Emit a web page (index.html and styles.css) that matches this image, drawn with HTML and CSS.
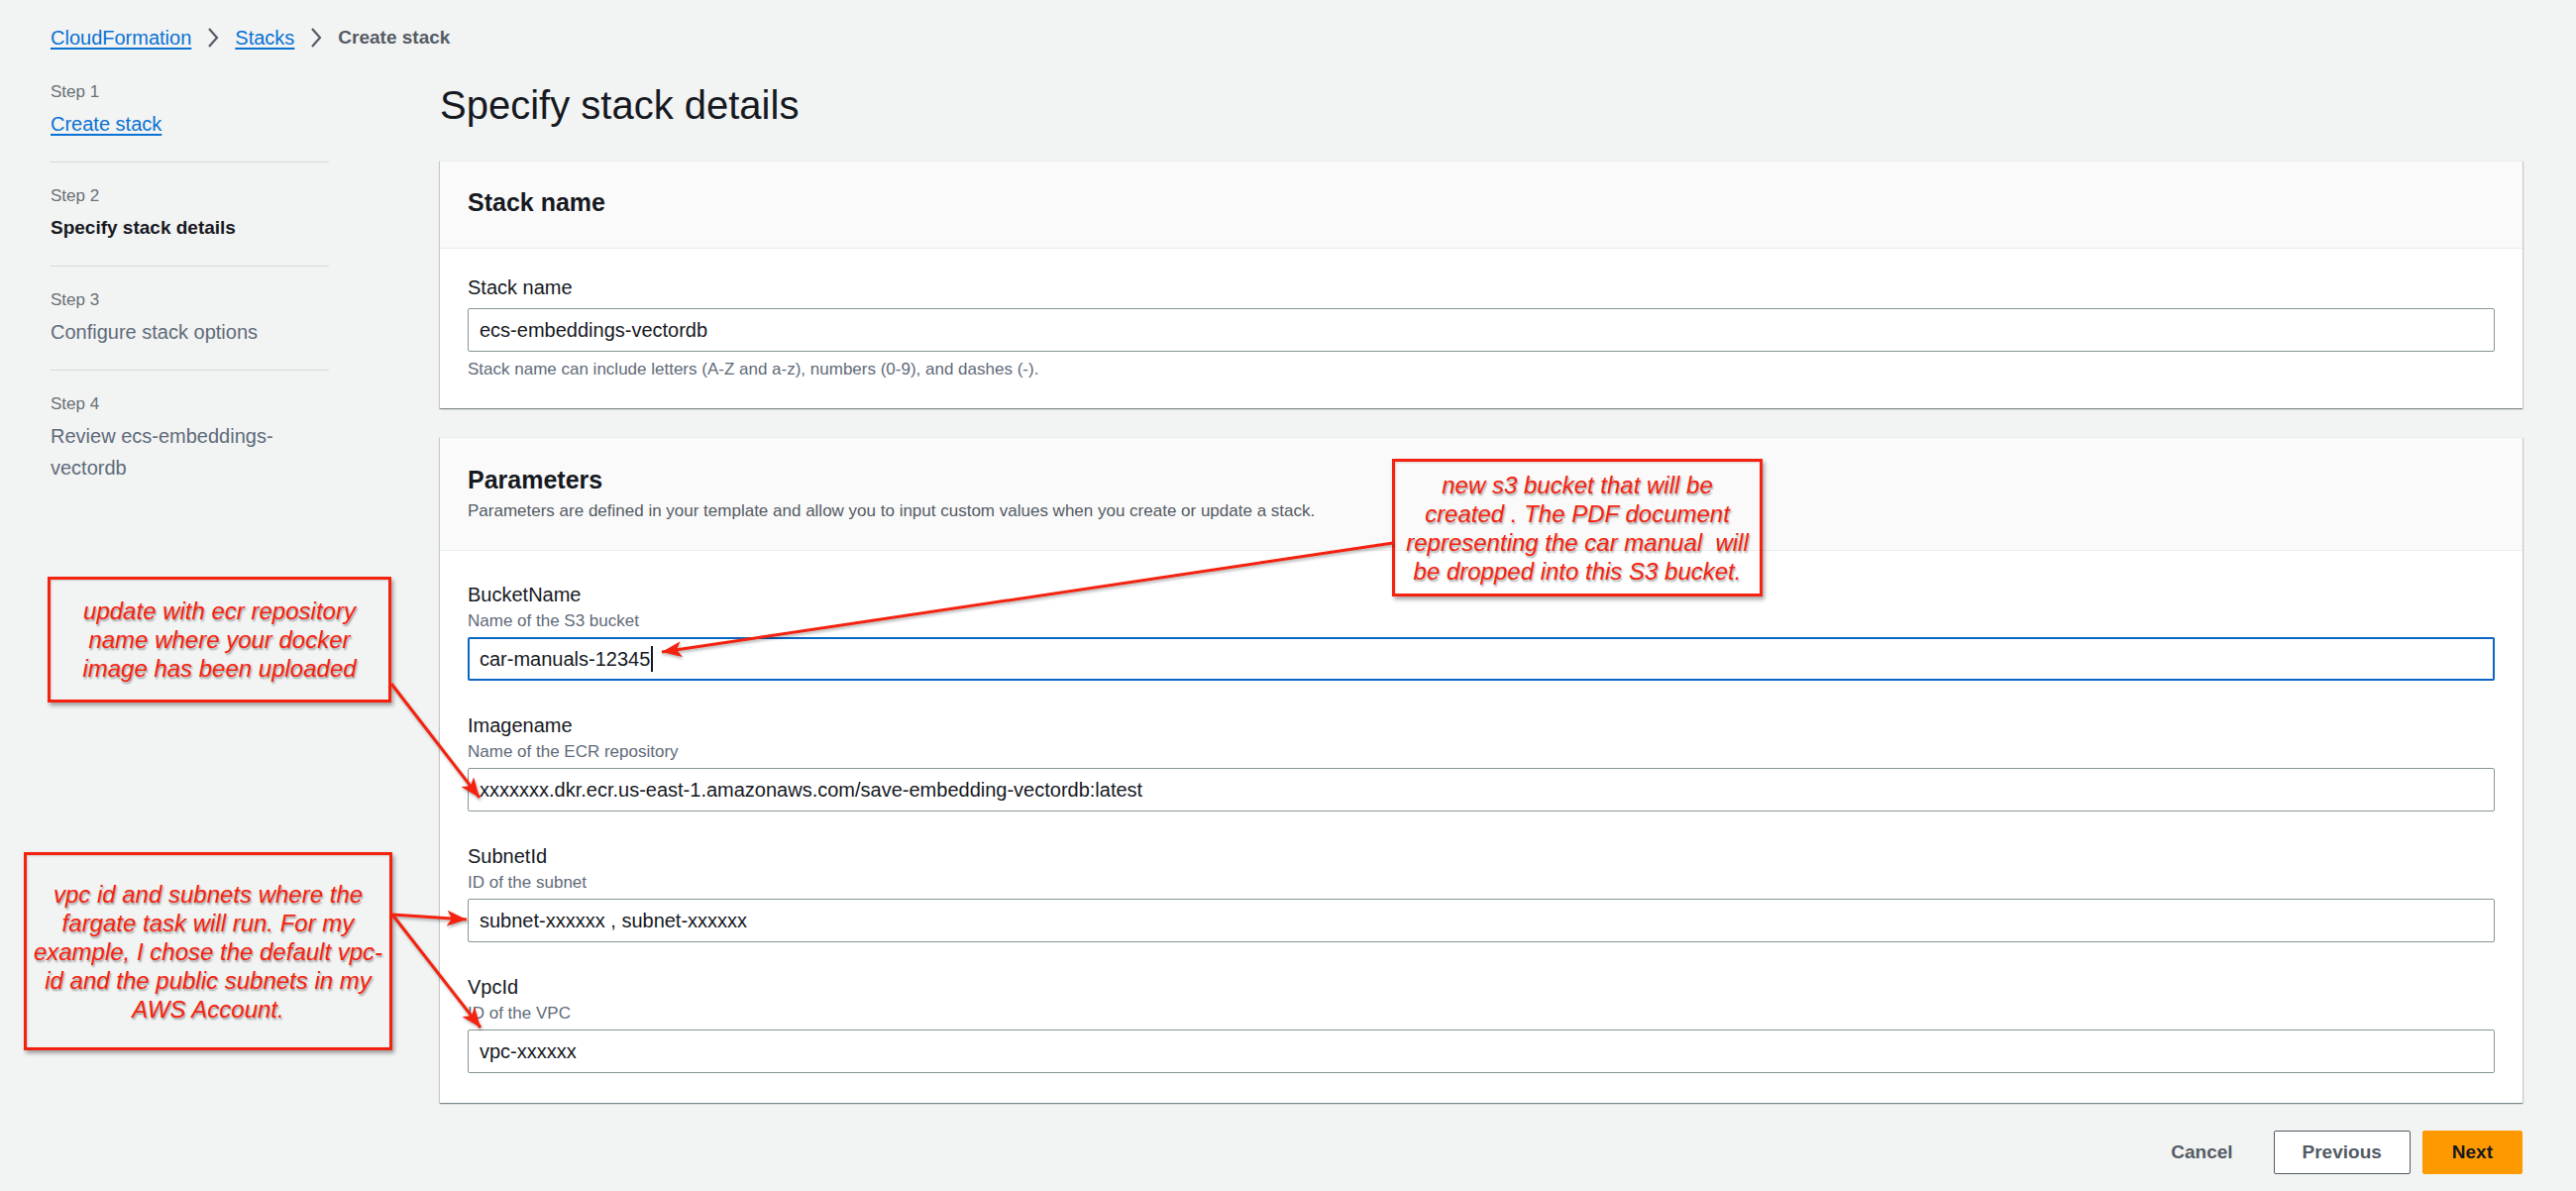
FILE: index.html
```html
<!DOCTYPE html>
<html lang="en">
<head>
<meta charset="utf-8">
<title>Specify stack details</title>
<link rel="stylesheet" href="styles.css">
</head>
<body>
<div class="page">
  <nav class="breadcrumb">
    <a class="crumb-link" href="#">CloudFormation</a>
    <svg class="chev" viewBox="0 0 12 22" width="12" height="22"><polyline points="2,2 10,11 2,20" fill="none" stroke="#545b64" stroke-width="2.2"/></svg>
    <a class="crumb-link" href="#">Stacks</a>
    <svg class="chev" viewBox="0 0 12 22" width="12" height="22"><polyline points="2,2 10,11 2,20" fill="none" stroke="#545b64" stroke-width="2.2"/></svg>
    <span class="crumb-current">Create stack</span>
  </nav>

  <div class="layout">
    <ul class="steps">
      <li class="step">
        <div class="step-num">Step 1</div>
        <div class="step-title"><a class="step-link" href="#">Create stack</a></div>
      </li>
      <li class="step">
        <div class="step-num">Step 2</div>
        <div class="step-title step-active">Specify stack details</div>
      </li>
      <li class="step">
        <div class="step-num">Step 3</div>
        <div class="step-title step-disabled">Configure stack options</div>
      </li>
      <li class="step step-last">
        <div class="step-num">Step 4</div>
        <div class="step-title step-disabled">Review ecs-embeddings-vectordb</div>
      </li>
    </ul>

    <main class="main">
      <h1 class="page-title">Specify stack details</h1>

      <section class="card">
        <header class="card-header card-header-single">
          <h2 class="card-title">Stack name</h2>
        </header>
        <div class="card-body card-body-stack">
          <div class="field-label">Stack name</div>
          <div class="input">ecs-embeddings-vectordb</div>
          <div class="field-hint">Stack name can include letters (A-Z and a-z), numbers (0-9), and dashes (-).</div>
        </div>
      </section>

      <section class="card card-params">
        <header class="card-header card-header-desc">
          <h2 class="card-title">Parameters</h2>
          <p class="card-desc">Parameters are defined in your template and allow you to input custom values when you create or update a stack.</p>
        </header>
        <div class="card-body card-body-params">
          <div class="field">
            <div class="field-label">BucketName</div>
            <div class="field-desc">Name of the S3 bucket</div>
            <div class="input input-focus">car-manuals-12345<span class="caret"></span></div>
          </div>
          <div class="field">
            <div class="field-label">Imagename</div>
            <div class="field-desc">Name of the ECR repository</div>
            <div class="input">xxxxxxx.dkr.ecr.us-east-1.amazonaws.com/save-embedding-vectordb:latest</div>
          </div>
          <div class="field">
            <div class="field-label">SubnetId</div>
            <div class="field-desc">ID of the subnet</div>
            <div class="input">subnet-xxxxxx , subnet-xxxxxx</div>
          </div>
          <div class="field">
            <div class="field-label">VpcId</div>
            <div class="field-desc">ID of the VPC</div>
            <div class="input">vpc-xxxxxx</div>
          </div>
        </div>
      </section>

      <div class="actions">
        <button class="btn btn-link">Cancel</button>
        <button class="btn btn-normal">Previous</button>
        <button class="btn btn-primary">Next</button>
      </div>
    </main>
  </div>
</div>

<div class="note note-ecr">update with ecr repository<br>name where your docker<br>image has been uploaded</div>
<div class="note note-vpc">vpc id and subnets where the<br>fargate task will run. For my<br>example, I chose the default vpc-<br>id and the public subnets in my<br>AWS Account.</div>
<div class="note note-s3">new s3 bucket that will be<br>created . The PDF document<br>representing the car manual&nbsp; will<br>be dropped into this S3 bucket.</div>

<svg class="arrows" width="2600" height="1202" viewBox="0 0 2600 1202">
  <defs>
    <marker id="head" markerUnits="userSpaceOnUse" markerWidth="22" markerHeight="16" refX="20" refY="8" orient="auto">
      <path d="M0,0 L20,8 L0,16 L5,8 Z" fill="#f5220f"/>
    </marker>
  </defs>
  <g stroke="#f5220f" stroke-width="3" fill="none" marker-end="url(#head)">
    <line x1="1406" y1="548" x2="668" y2="658"/>
    <line x1="395" y1="690" x2="484" y2="805"/>
    <line x1="396" y1="923" x2="471" y2="928"/>
    <line x1="396" y1="923" x2="485" y2="1037"/>
  </g>
</svg>
</body>
</html>
```

FILE: styles.css
```css
* { box-sizing: border-box; }

body {
  margin: 0;
  background: #f2f3f3;
  font-family: "Liberation Sans", Arial, sans-serif;
  color: #16191f;
  position: relative;
  width: 2600px;
  height: 1202px;
  overflow: hidden;
}

.page {
  padding: 26px 54px 0 51px;
}

.breadcrumb {
  display: flex;
  align-items: center;
  height: 24px;
  gap: 16px;
  font-size: 20px;
}

.crumb-link {
  color: #0972d3;
  text-decoration: underline;
  text-underline-offset: 3px;
}

.chev { display: block; }

.crumb-current {
  color: #545b64;
  font-weight: bold;
  font-size: 19px;
}

.layout {
  display: grid;
  grid-template-columns: 281px 1fr;
  column-gap: 112px;
  margin-top: 32px;
}

/* steps nav */
.steps {
  list-style: none;
  margin: 0;
  padding: 0;
}

.step {
  padding-bottom: 22px;
  border-bottom: 1px solid #d5dbdb;
  margin-bottom: 23px;
}

.step-last {
  border-bottom: none;
}

.step-num {
  font-size: 17px;
  line-height: 22px;
  color: #687078;
}

.step-title {
  margin-top: 5px;
  font-size: 20px;
  line-height: 32px;
  color: #5f6b7a;
}

.step-link {
  color: #0972d3;
  text-decoration: underline;
  text-underline-offset: 3px;
}

.step-active {
  color: #16191f;
  font-weight: bold;
  font-size: 19px;
}

/* main */
.main {
  min-width: 0;
}

.page-title {
  margin: 0;
  font-size: 40px;
  line-height: 48px;
  font-weight: normal;
  color: #16191f;
}

.card {
  margin-top: 32px;
  background: #fff;
  border-top: 1px solid #eaeded;
  box-shadow: 0 1px 1px 0 rgba(0, 28, 36, 0.3), 1px 1px 1px 0 rgba(0, 28, 36, 0.15), -1px 1px 1px 0 rgba(0, 28, 36, 0.15);
}

.card-params {
  margin-top: 29px;
}

.card-header {
  background: #fafafa;
  border-bottom: 1px solid #eaeded;
  padding: 0 28px;
}

.card-header-single {
  height: 88px;
  display: flex;
  align-items: center;
  padding-bottom: 5px;
}

.card-header-desc {
  padding-top: 27px;
  padding-bottom: 28px;
}

.card-title {
  margin: 0;
  font-size: 25px;
  line-height: 30px;
  font-weight: bold;
  color: #16191f;
}

.card-desc {
  margin: 6px 0 0;
  font-size: 17px;
  line-height: 22px;
  color: #545b64;
}

.card-body {
  padding: 0 28px;
}

.card-body-stack {
  padding-top: 27px;
  padding-bottom: 29px;
}

.card-body-stack .input {
  margin-top: 9px;
}

.card-body-params {
  padding-top: 32px;
  padding-bottom: 30px;
  display: flex;
  flex-direction: column;
  gap: 33px;
}

.field-label {
  font-size: 20px;
  line-height: 24px;
  color: #16191f;
}

.field-desc {
  margin-top: 4px;
  font-size: 17px;
  line-height: 22px;
  color: #5f6b7a;
}

.field-desc + .input {
  margin-top: 5px;
}

.field-hint {
  margin-top: 8px;
  font-size: 17px;
  line-height: 20px;
  color: #5f6b7a;
}

.input {
  height: 44px;
  border: 1px solid #879596;
  border-radius: 2px;
  padding: 0 11px;
  display: flex;
  align-items: center;
  font-size: 20px;
  color: #16191f;
  background: #fff;
  white-space: nowrap;
}

.input-focus {
  border: 2px solid #0a66c2;
  padding: 0 10px;
}

.caret {
  display: inline-block;
  width: 0;
  height: 26px;
  border-left: 2px solid #16191f;
  margin-left: 1px;
}

/* actions */
.actions {
  margin-top: 28px;
  display: flex;
  justify-content: flex-end;
  gap: 12px;
}

.btn {
  height: 44px;
  padding: 0 28px;
  border-radius: 2px;
  font-family: "Liberation Sans", Arial, sans-serif;
  font-size: 19px;
  font-weight: bold;
  border: 1px solid transparent;
  background: none;
  cursor: pointer;
}

.btn-link {
  color: #545b64;
}

.btn-normal {
  background: #fff;
  border-color: #545b64;
  color: #545b64;
}

.btn-primary {
  background: #ff9900;
  border-color: #ff9900;
  color: #16191f;
  padding: 0 29px;
}

/* annotations */
.note {
  position: absolute;
  border: 3px solid #f5220f;
  box-shadow: 2px 3px 4px rgba(0, 0, 0, 0.35), inset 1px 1px 2px rgba(0, 0, 0, 0.15);
  display: flex;
  align-items: center;
  justify-content: center;
  text-align: center;
  font-family: "Liberation Sans", Arial, sans-serif;
  font-style: italic;
  font-size: 24px;
  line-height: 29px;
  color: #f5220f;
  text-shadow: 1px 2px 2px rgba(0, 0, 0, 0.35);
  white-space: nowrap;
}

.note-ecr {
  left: 48px;
  top: 582px;
  width: 347px;
  height: 127px;
}

.note-vpc {
  left: 24px;
  top: 860px;
  width: 372px;
  height: 200px;
}

.note-s3 {
  left: 1405px;
  top: 463px;
  width: 374px;
  height: 139px;
}

.arrows {
  position: absolute;
  left: 0;
  top: 0;
  pointer-events: none;
  filter: drop-shadow(1px 2px 1.5px rgba(0, 0, 0, 0.3));
}
```
